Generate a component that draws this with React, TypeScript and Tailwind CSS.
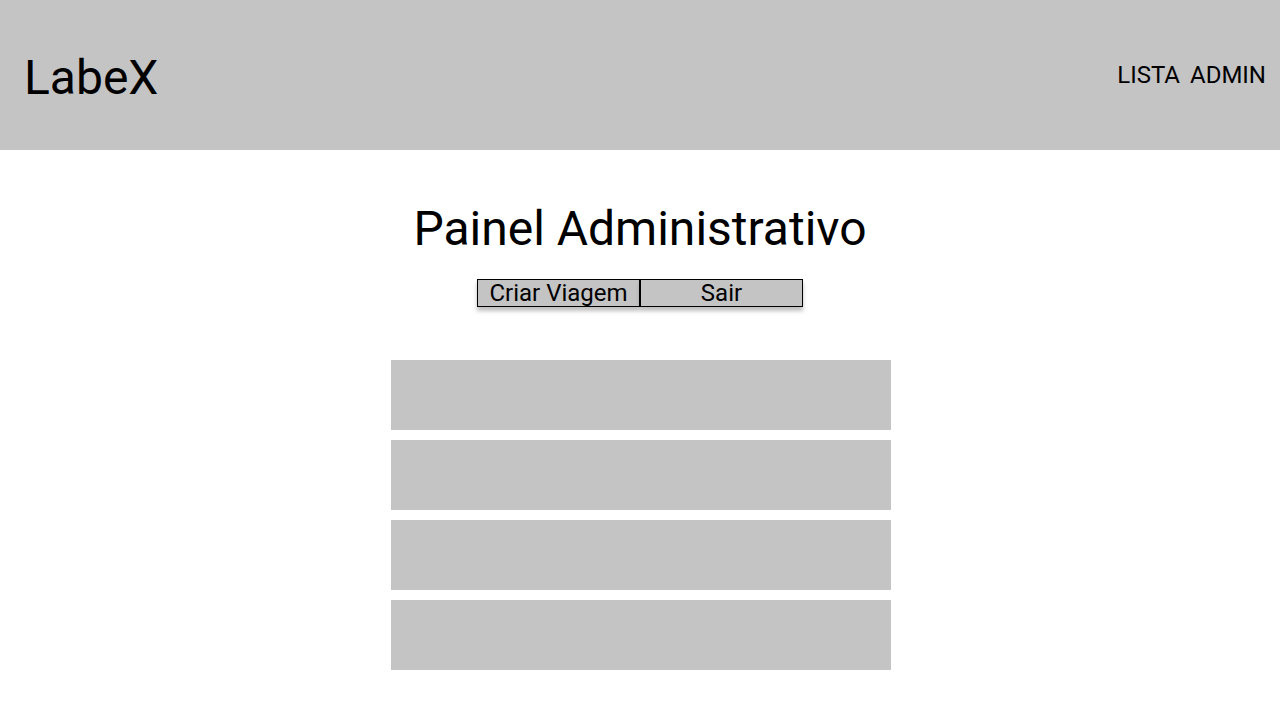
const trips = [1, 2, 3, 4];

const App: React.FC = () => {
  return (
    <div className="min-h-screen bg-white font-['Roboto',sans-serif] text-black">
      <header className="flex h-[150px] items-center justify-between bg-[#c4c4c4] pl-6 pr-[14px]">
        <h1 className="pt-[6px] text-[48px] leading-[56px]">LabeX</h1>
        <nav className="flex gap-[10px] text-[24px] leading-[28px]">
          <button>LISTA</button>
          <button>ADMIN</button>
        </nav>
      </header>

      <main className="flex flex-col items-center">
        <h2 className="mt-[51px] text-[48px] leading-[56px]">Painel Administrativo</h2>
        <div className="mt-[22px] flex">
          <button className="box-border h-[28px] w-[163px] border border-black bg-[#c4c4c4] text-[24px] leading-[24px] shadow-[0_4px_4px_rgba(0,0,0,0.25)]">
            Criar Viagem
          </button>
          <button className="box-border h-[28px] w-[163px] border border-black bg-[#c4c4c4] text-[24px] leading-[24px] shadow-[0_4px_4px_rgba(0,0,0,0.25)]">
            Sair
          </button>
        </div>
        <ul className="mt-[53px] ml-[2px] flex flex-col gap-[10px]">
          {trips.map((t) => (
            <li key={t} className="h-[70px] w-[500px] bg-[#c4c4c4]" />
          ))}
        </ul>
      </main>
    </div>
  );
};

export default App;
